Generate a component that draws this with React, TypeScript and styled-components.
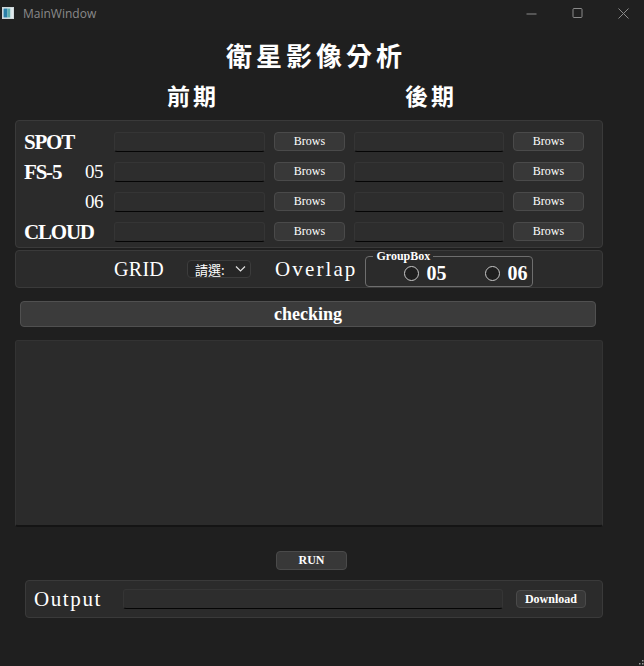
import React from 'react';
import styled, { createGlobalStyle } from 'styled-components';

const Global = createGlobalStyle`
  * { box-sizing: border-box; }
  html, body { margin: 0; padding: 0; background: #1f1f1f; }
  body { font-family: "Liberation Serif", "Noto Sans CJK TC", serif; color: #fff; }
`;

const Window = styled.div`
  position: relative;
  width: 644px;
  height: 666px;
  background: #1f1f1f;
  overflow: hidden;
`;

const TitleBar = styled.div`
  height: 30px;
  display: flex;
  align-items: center;
  background: #202020;
  padding: 0 0 4px 2px;
`;

const AppIcon = styled.svg`
  width: 12px;
  height: 12px;
  display: block;
`;

const WindowTitle = styled.span`
  margin-left: 9px;
  font-family: "Open Sans", "Noto Sans", sans-serif;
  font-size: 12px;
  color: #8a8a8a;
`;

const Controls = styled.div`
  margin-left: auto;
  display: flex;
  align-items: center;
  gap: 35px;
  padding-right: 15px;
`;

const CtrlIcon = styled.svg`
  width: 11px;
  height: 11px;
  display: block;
`;

const Content = styled.div`
  display: flex;
  flex-direction: column;
  padding: 10px 41px 0 15px;
`;

const Heading = styled.div`
  height: 30px;
  line-height: 30px;
  padding-left: 211px;
  font-family: "Noto Sans CJK TC", sans-serif;
  font-weight: 700;
  font-size: 26px;
  letter-spacing: 4px;
  white-space: nowrap;
`;

const PeriodRow = styled.div`
  margin-top: 11px;
  height: 28px;
  display: flex;
  align-items: center;
  font-family: "Noto Sans CJK TC", sans-serif;
  font-weight: 700;
  font-size: 23px;
  letter-spacing: 3px;
`;

const Period = styled.span<{ $offset: number }>`
  margin-left: ${p => p.$offset}px;
`;

const Panel = styled.div`
  background: #2b2b2b;
  border: 1px solid #3a3a3a;
  border-radius: 4px;
`;

const FilePanel = styled(Panel)`
  margin-top: 11px;
  padding: 11px 0 5px 8px;
  display: grid;
  grid-template-columns: 81px 151px 71px 150px 71px;
  column-gap: 9px;
  row-gap: 10px;
  grid-auto-rows: 20px;
`;

const LabelCell = styled.div`
  display: flex;
  align-items: center;
  height: 20px;
  white-space: nowrap;
`;

const MainLabel = styled.span`
  flex: 0 0 61px;
  font-weight: 700;
  font-size: 21px;
  letter-spacing: -1.2px;
  line-height: 20px;
`;

const SubLabel = styled.span`
  font-size: 19px;
  line-height: 20px;
  letter-spacing: -0.5px;
`;

const TextInput = styled.div<{ $h?: number }>`
  height: ${p => p.$h ?? 20}px;
  background: #2d2d2d;
  border: 1px solid #353535;
  border-bottom: 1.5px solid #050505;
  border-radius: 3px;
`;

const Button = styled.div<{ $h?: number; $bold?: boolean; $size?: number }>`
  height: ${p => p.$h ?? 19}px;
  display: flex;
  align-items: center;
  justify-content: center;
  background: #383838;
  border: 1px solid #4a4a4a;
  border-radius: 4px;
  font-size: ${p => p.$size ?? 12}px;
  font-weight: ${p => (p.$bold ? 700 : 400)};
  color: #fff;
  white-space: nowrap;
`;

const OptionsPanel = styled(Panel)`
  margin-top: 2px;
  height: 38px;
  display: flex;
  align-items: center;
  padding-left: 98px;
`;

const WideLabel = styled.span<{ $gap?: number; $spacing?: number; $size?: number }>`
  margin-left: ${p => p.$gap ?? 0}px;
  font-size: ${p => p.$size ?? 21}px;
  letter-spacing: ${p => p.$spacing ?? 1.6}px;
  white-space: nowrap;
`;

const Combo = styled.div`
  margin-left: 23px;
  width: 64px;
  height: 18px;
  display: flex;
  align-items: center;
  padding: 0 4px 0 7px;
  border: 1px solid #3c3c3c;
  border-radius: 4px;
  background: #262626;
  font-family: "Noto Sans CJK TC", sans-serif;
  font-size: 13px;
  white-space: nowrap;
`;

const Chevron = styled.svg`
  margin-left: auto;
  width: 11px;
  height: 8px;
  display: block;
`;

const GroupBox = styled.fieldset`
  margin: 0 0 0 8px;
  align-self: flex-end;
  width: 168px;
  height: 37px;
  padding: 0;
  border: 1px solid #6e6e6e;
  border-radius: 4px;
`;

const Legend = styled.legend`
  margin: 0 0 0 7px;
  padding: 0 3px;
  font-size: 12px;
  font-weight: 700;
  line-height: 12px;
  text-align: left;
`;

const RadioRow = styled.div`
  display: flex;
  align-items: center;
  gap: 39px;
  padding-left: 38px;
  height: 22px;
`;

const Radio = styled.div`
  display: flex;
  align-items: center;
  gap: 7px;
`;

const RadioDot = styled.span`
  width: 15px;
  height: 15px;
  border-radius: 50%;
  border: 1.5px solid #c8c8c8;
  background: #1e1e1e;
`;

const RadioText = styled.span`
  font-size: 20px;
  font-weight: 700;
  line-height: 20px;
`;

const CheckButton = styled(Button)`
  margin: 13px 7px 0 5px;
  background: #3b3b3b;
  border-color: #505050;
`;

const LogArea = styled.div`
  margin-top: 13px;
  height: 187px;
  background: #2b2b2b;
  border: 1px solid #333;
  border-bottom: 2px solid #141414;
  border-radius: 3px;
`;

const RunRow = styled.div`
  margin-top: 24px;
  display: flex;
  padding-left: 261px;
`;

const OutputPanel = styled(Panel)`
  margin: 10px 0 0 10px;
  height: 38px;
  display: flex;
  align-items: center;
  padding: 0 16px 0 8px;
`;

const Grip = styled.svg`
  position: absolute;
  right: 0;
  bottom: 0;
  width: 8px;
  height: 8px;
`;

const rows = [
  { main: 'SPOT', sub: '' },
  { main: 'FS-5', sub: '05' },
  { main: '', sub: '06' },
  { main: 'CLOUD', sub: '' },
];

export default function App() {
  return (
    <Window>
      <Global />
      <TitleBar>
        <AppIcon viewBox="0 0 12 12">
          <rect x="0.5" y="0.5" width="11" height="11" fill="#e8eef0" stroke="#cfd8dc" />
          <rect x="1.5" y="1.5" width="4" height="9" fill="#2a7fa8" />
          <rect x="5.5" y="1.5" width="3" height="9" fill="#5fb0b0" />
          <rect x="8.5" y="1.5" width="2" height="9" fill="#d9e6ea" />
        </AppIcon>
        <WindowTitle>MainWindow</WindowTitle>
        <Controls>
          <CtrlIcon viewBox="0 0 11 11">
            <line x1="0.5" y1="6" x2="10.5" y2="6" stroke="#8a8a8a" strokeWidth="1" />
          </CtrlIcon>
          <CtrlIcon viewBox="0 0 11 11">
            <rect x="1" y="0.5" width="9" height="9" rx="1" fill="none" stroke="#8a8a8a" strokeWidth="1" />
          </CtrlIcon>
          <CtrlIcon viewBox="0 0 11 11">
            <path d="M0.5 0.5 L10.5 10.5 M10.5 0.5 L0.5 10.5" stroke="#8a8a8a" strokeWidth="1" />
          </CtrlIcon>
        </Controls>
      </TitleBar>
      <Content>
        <Heading>衛星影像分析</Heading>
        <PeriodRow>
          <Period $offset={152}>前期</Period>
          <Period $offset={186}>後期</Period>
        </PeriodRow>
        <FilePanel>
          {rows.map((r, i) => (
            <React.Fragment key={i}>
              <LabelCell>
                <MainLabel>{r.main}</MainLabel>
                <SubLabel>{r.sub}</SubLabel>
              </LabelCell>
              <TextInput />
              <Button>Brows</Button>
              <TextInput />
              <Button>Brows</Button>
            </React.Fragment>
          ))}
        </FilePanel>
        <OptionsPanel>
          <WideLabel $size={20} $spacing={0.3}>GRID</WideLabel>
          <Combo>
            請選:
            <Chevron viewBox="0 0 11 8">
              <path d="M1 1.5 L5.5 6 L10 1.5" fill="none" stroke="#e0e0e0" strokeWidth="1.2" />
            </Chevron>
          </Combo>
          <WideLabel $gap={24} $spacing={2.1}>Overlap</WideLabel>
          <GroupBox>
            <Legend>GroupBox</Legend>
            <RadioRow>
              <Radio>
                <RadioDot />
                <RadioText>05</RadioText>
              </Radio>
              <Radio>
                <RadioDot />
                <RadioText>06</RadioText>
              </Radio>
            </RadioRow>
          </GroupBox>
        </OptionsPanel>
        <CheckButton $h={26} $bold $size={18}>checking</CheckButton>
        <LogArea />
        <RunRow>
          <Button style={{ width: 71 }} $bold $size={12}>RUN</Button>
        </RunRow>
        <OutputPanel>
          <WideLabel>Output</WideLabel>
          <TextInput style={{ width: 380, marginLeft: 21 }} />
          <Button style={{ width: 70, marginLeft: 13 }} $h={18} $bold $size={12}>Download</Button>
        </OutputPanel>
      </Content>
      <Grip viewBox="0 0 8 8">
        <rect x="6" y="2" width="1.5" height="1.5" fill="#9a9a9a" />
        <rect x="3" y="5" width="1.5" height="1.5" fill="#9a9a9a" />
        <rect x="6" y="5" width="1.5" height="1.5" fill="#9a9a9a" />
      </Grip>
    </Window>
  );
}
